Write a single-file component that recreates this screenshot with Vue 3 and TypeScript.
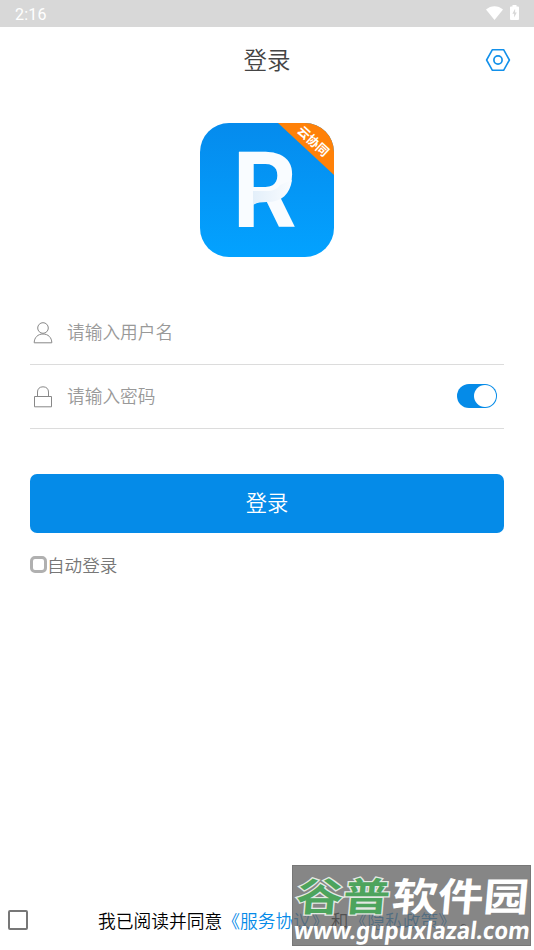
<script setup lang="ts">
import { ref } from 'vue'

const username = ref('')
const password = ref('')
</script>

<template>
  <main class="screen">
    <header class="status">
      <span class="time">2:16</span>
      <svg class="wifi" viewBox="0 0 17 14"><path d="M0 3.6C4.8-1 12.2-1 17 3.6L8.5 14Z" fill="#fff" /></svg>
      <svg class="battery" viewBox="0 0 9 15">
        <path d="M2.5 1.5V0h4v1.5H8a1 1 0 0 1 1 1V14a1 1 0 0 1-1 1H1a1 1 0 0 1-1-1V2.5a1 1 0 0 1 1-1Z" fill="#fff" />
        <path d="M5.1 3.8 2.4 8.7h1.7v3.7l2.7-5H5.1Z" fill="#d8d8d8" />
      </svg>
    </header>

    <nav class="bar">
      <h1>登录</h1>
      <svg class="settings" viewBox="0 0 26 24" fill="none" stroke="#1290ea">
        <path d="M7.4 1.7h11.2L24.4 12l-5.8 10.3H7.4L1.6 12Z" stroke-width="1.6" stroke-linejoin="round" />
        <circle cx="13" cy="12" r="4.1" stroke-width="1.7" />
      </svg>
    </nav>

    <svg class="logo" viewBox="0 0 134 134">
      <defs>
        <linearGradient id="blue" x2="0" y2="1"><stop stop-color="#058bed" /><stop offset="1" stop-color="#03a2ff" /></linearGradient>
        <linearGradient id="fold"><stop stop-color="#e3effa" /><stop offset="1" stop-color="#f9fcff" /></linearGradient>
        <clipPath id="tile"><rect width="134" height="134" rx="29" /></clipPath>
      </defs>
      <g clip-path="url(#tile)">
        <rect width="134" height="134" fill="url(#blue)" />
        <path d="M78 0h56v52Z" fill="#ff8108" />
        <text class="letter" transform="translate(32.4 104) scale(.96 1)">R</text>
        <path d="M53 68h14c6 0 10-2 13-6l12-5c-2 14-10 22-25 22-6 0-11 1-14 3Z" fill="url(#fold)" />
        <text class="ribbon" transform="translate(113.5 18) rotate(43)" text-anchor="middle" y="4.9">云协同</text>
      </g>
    </svg>

    <form class="form" @submit.prevent>
      <label class="field">
        <svg class="icon" viewBox="0 0 20 22"><circle cx="10" cy="6" r="5.3" /><path d="M1.2 20.8c0-5.3 3.7-8.8 8.8-8.8s8.8 3.5 8.8 8.8Z" /></svg>
        <input v-model="username" type="text" placeholder="请输入用户名" />
      </label>
      <label class="field">
        <svg class="icon" viewBox="0 0 20 22"><path d="M1.5 10.5h17v10.3h-17ZM4.5 10.5V6c0-3.1 2-5.2 5.5-5.2s5.5 2.1 5.5 5.2v4.5" /></svg>
        <input v-model="password" type="password" placeholder="请输入密码" />
        <span class="toggle"><i></i></span>
      </label>
      <button class="submit">登录</button>
      <label class="auto"><span class="auto-box"></span>自动登录</label>
    </form>

    <footer class="terms">
      <span class="terms-box"></span>
      <p>我已阅读并同意<a>《服务协议》</a><span>和</span><a>《隐私政策》</a> 。</p>
    </footer>

    <svg class="mark" viewBox="0 0 239 81">
      <rect x=".5" y=".5" width="238" height="80" fill="#656565" fill-opacity=".79" stroke="#777" />
      <g class="mark-name" transform="translate(3 45.5) skewX(-5)">
        <text class="green" textLength="94" lengthAdjust="spacingAndGlyphs">谷普</text>
        <text x="96" fill="#fff" textLength="137" lengthAdjust="spacingAndGlyphs">软件园</text>
      </g>
      <text class="mark-url" transform="translate(1 74) skewX(-7)" textLength="236" lengthAdjust="spacingAndGlyphs">www.gupuxlazal.com</text>
    </svg>
  </main>
</template>

<style>
body { margin: 0; background: #fff; overflow: hidden; }
</style>

<style scoped>
.screen {
  position: relative;
  box-sizing: border-box;
  width: 534px;
  height: 950px;
  display: flex;
  flex-direction: column;
  overflow: hidden;
  background: #fff;
  font-family: "Noto Sans CJK SC", sans-serif;
  font-weight: 350;
}
.status { display: flex; align-items: center; height: 27px; box-sizing: border-box; padding: 0 15px; background: #d8d8d8; }
.time { flex: 1; color: #fff; font: 400 16px/27px Roboto, sans-serif; letter-spacing: .2px; padding-top: 1px; }
.wifi { width: 17px; height: 14px; margin: 0 7px 1px 0; }
.battery { width: 9px; height: 15px; margin-bottom: 2px; }
.bar { display: grid; grid-template-columns: 1fr auto 1fr; align-items: center; height: 66px; padding: 0 23px; }
h1 { grid-column: 2; margin: 0 0 3px; color: #444; font-size: 23.5px; line-height: 34px; font-weight: 350; }
.settings { justify-self: end; width: 26px; height: 24px; }
.logo { width: 134px; height: 134px; margin: 30px 0 0 200px; flex: none; }
.letter { font: 700 105px Roboto, sans-serif; fill: #f9fcff; }
.ribbon { font: 700 12.5px "Noto Sans CJK SC", sans-serif; fill: #fff; }
.form { display: flex; flex-direction: column; margin: 44px 30px 0; }
.field { display: flex; align-items: center; height: 64px; box-sizing: border-box; border-bottom: 1px solid #dcdcdc; padding: 0 7px 0 3px; }
.icon { width: 20px; height: 22px; fill: none; stroke: #888; stroke-width: 1; }
input { flex: 1; min-width: 0; height: 32px; margin: 0 0 3px 14px; padding: 0; border: 0; outline: 0; background: none; font: inherit; font-size: 17.7px; }
input::placeholder { color: #999; opacity: 1; }
.toggle { display: flex; justify-content: flex-end; width: 40px; height: 24px; box-sizing: border-box; margin-bottom: 1px; padding: 1px; border-radius: 12px; background: #058be8; }
.toggle i { width: 22px; height: 22px; border-radius: 50%; background: #fff; }
.submit { height: 59px; margin: 45px 0 0; padding: 0 0 4px; border: 0; border-radius: 7px; background: #058be8; color: #fff; font: inherit; font-size: 21.3px; }
.auto { display: flex; align-items: center; height: 26px; margin-top: 18px; color: #777; font-size: 17.6px; }
.auto-box { width: 17px; height: 17px; box-sizing: border-box; border: 3px solid #b0b0b0; border-radius: 5px; }
.terms { display: flex; align-items: center; height: 30px; margin-top: auto; margin-bottom: 15px; padding-left: 8px; }
.terms-box { width: 20px; height: 20px; box-sizing: border-box; border: 2px solid #777; border-radius: 2px; }
.terms p { margin: 0 0 0 70px; color: #000; font-size: 17.75px; line-height: 30px; white-space: nowrap; }
.terms a { color: #058be8; }
.terms p span { margin: 0 1px 0 2px; }
.mark { position: absolute; left: 292px; top: 865px; width: 239px; height: 81px; }
.mark-name { font: 700 39px "Noto Sans CJK SC", sans-serif; }
.green { fill: #4da45d; stroke: #e4e9e4; stroke-width: 2.5px; paint-order: stroke; }
.mark-url { font: 700 24px "Noto Sans", sans-serif; fill: #fff; }
</style>
